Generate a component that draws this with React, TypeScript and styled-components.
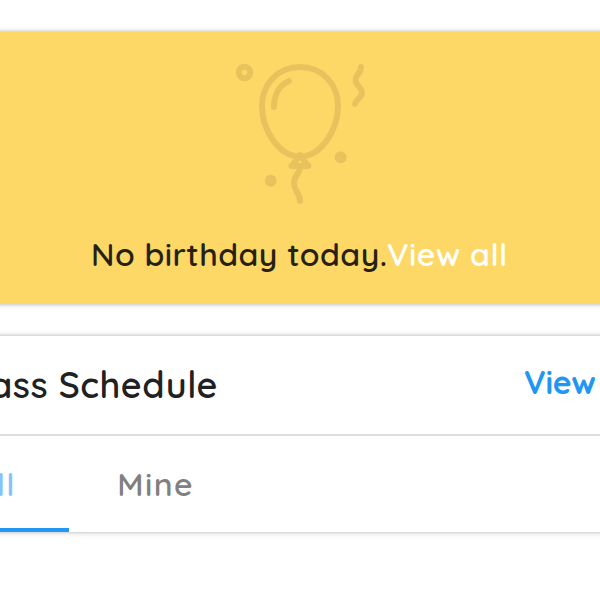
import React from "react";
import styled, { createGlobalStyle } from "styled-components";

const Global = createGlobalStyle`
  * { box-sizing: border-box; }
  html, body { margin: 0; overflow: hidden; background: #fff; }
  body { font-family: Quicksand, Lato, "Noto Sans", sans-serif; color: #212121; }
`;

const Page = styled.main`
  width: 600px;
  height: 600px;
  padding-top: 32px;
  overflow: hidden;
  display: flex;
  flex-direction: column;
  gap: 32px;
`;

const Card = styled.section<{ $tone: string; $height: number }>`
  flex: none;
  margin: 0 -16px;
  padding: 0 16px;
  height: ${(p) => p.$height}px;
  background: ${(p) => p.$tone};
  box-shadow: 0 0 4px rgba(0, 0, 0, 0.25), 0 0 8px rgba(0, 0, 0, 0.1);
`;

const Birthday = styled(Card)`
  display: flex;
  flex-direction: column;
  align-items: center;
  padding-top: 32px;
`;

const Balloon = styled.svg`
  width: 140px;
  height: 140px;
  flex: none;
  fill: none;
  stroke: #e8c35d;
  stroke-width: 6;
  stroke-linecap: round;
  stroke-linejoin: round;
`;

const Message = styled.p`
  margin: 29px 0 0;
  width: 600px;
  padding-left: 91px;
  display: flex;
  font-size: 32px;
  line-height: 42px;
  font-weight: 600;
  letter-spacing: 0.45px;
  white-space: nowrap;
  color: #262213;
`;

const Notice = styled.span`
  width: 296px;
`;

const WhiteLink = styled.a`
  color: #fff;
`;

const Header = styled.header`
  display: flex;
  align-items: center;
  height: 98px;
  white-space: nowrap;
`;

const Title = styled.h2`
  margin: 0;
  width: 218px;
  display: flex;
  justify-content: flex-end;
  font-size: 36px;
  line-height: 44px;
  font-weight: 600;
  letter-spacing: 0.5px;
`;

const ViewLink = styled.a`
  margin: -6px 0 0 306px;
  color: #2196f3;
  font-size: 32px;
  line-height: 40px;
  font-weight: 700;
  letter-spacing: -0.3px;
`;

const Tabs = styled.nav`
  display: flex;
  height: 98px;
  border-top: 2px solid #dedede;
`;

const Tab = styled.div<{ $active?: boolean }>`
  width: ${(p) => (p.$active ? 69 : 172)}px;
  padding: 4px ${(p) => (p.$active ? 53 : 47)}px 0 0;
  display: flex;
  justify-content: flex-end;
  align-items: center;
  color: ${(p) => (p.$active ? "#84c4fb" : "#808080")};
  border-bottom: ${(p) => (p.$active ? "4px solid #2196f3" : "4px solid transparent")};
  font-size: 32px;
  line-height: 40px;
  font-weight: 600;
  letter-spacing: 1.4px;
  white-space: nowrap;
`;

export default function App() {
  return (
    <>
      <Global />
      <Page>
        <Birthday $tone="#fed866" $height={272}>
          <Balloon viewBox="0 0 140 140" aria-hidden="true">
            <circle cx="14.5" cy="8.5" r="5.7" />
            <path d="M70 3C48 3 32 20 32 42C32 66 49 92.500 70 92.500C91 92.500 108 66 108 42C108 20 92 3 70 3Z" />
            <path d="M44 43C44 30 50 21 59 17" />
            <path d="M70 91C67 96 65 98 61.5 102H78.500C75 98 73 96 70 91Z" />
            <path d="M70 104C70 109 64 111 64 119C64 128 70 128 70 137" />
            <path d="M131 3C131 10 125.500 10 125.500 16C125.500 22 132 23 132 29C132 34 126 35 125 40" />
            <circle cx="110.700" cy="93.200" r="3" />
            <circle cx="40.700" cy="116.700" r="3" />
          </Balloon>
          <Message>
            <Notice>No birthday today.</Notice>
            <WhiteLink>View all</WhiteLink>
          </Message>
        </Birthday>
        <Card $tone="#fff" $height={196}>
          <Header>
            <Title>Class Schedule</Title>
            <ViewLink>View all</ViewLink>
          </Header>
          <Tabs>
            <Tab $active>All</Tab>
            <Tab>Mine</Tab>
          </Tabs>
        </Card>
      </Page>
    </>
  );
}
